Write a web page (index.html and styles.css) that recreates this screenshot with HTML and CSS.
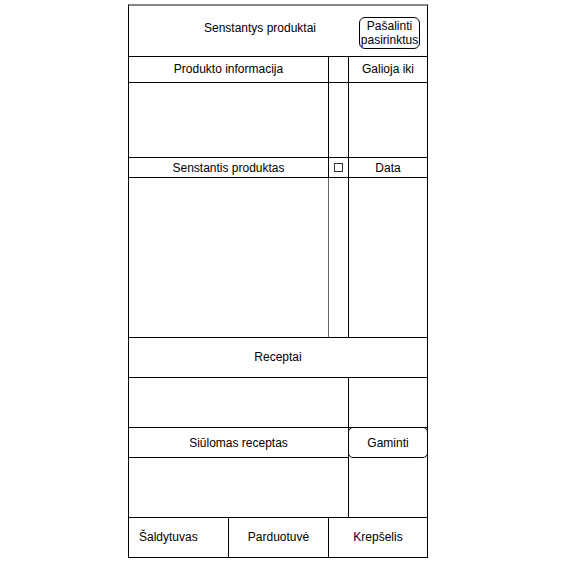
FILE: index.html
```html
<!DOCTYPE html>
<html lang="lt">
<head>
    <meta charset="UTF-8">
    <meta name="viewport" content="width=device-width, initial-scale=1.0">
    <title>Senstantys produktai</title>
    <link rel="stylesheet" href="styles.css">
</head>
<body>
    <div class="frame">
        <div class="header">
            <div class="title">Senstantys produktai</div>
            <div class="btn-remove">Pašalinti<br>pasirinktus</div>
        </div>

        <div class="table">
            <div class="cell head col-a">Produkto informacija</div>
            <div class="cell head col-b"></div>
            <div class="cell head col-c">Galioja iki</div>

            <div class="cell blank-1 col-a"></div>
            <div class="cell blank-1 col-b"></div>
            <div class="cell blank-1 col-c"></div>

            <div class="cell row col-a">Senstantis produktas</div>
            <div class="cell row col-b"><span class="check"></span></div>
            <div class="cell row col-c">Data</div>

            <div class="cell blank-2 col-a"></div>
            <div class="cell blank-2 col-b"></div>
            <div class="cell blank-2 col-c"></div>
        </div>

        <div class="section-title">Receptai</div>

        <div class="recipes">
            <div class="r-cell r-top left"></div>
            <div class="r-cell r-top"></div>
            <div class="r-cell r-mid left">Siūlomas receptas</div>
            <div class="btn-cook">Gaminti</div>
            <div class="r-cell r-bottom left"></div>
            <div class="r-cell r-bottom"></div>
        </div>

        <div class="nav">
            <div class="nav-item first">Šaldytuvas</div>
            <div class="nav-item">Parduotuvė</div>
            <div class="nav-item last">Krepšelis</div>
        </div>
    </div>
</body>
</html>
```

FILE: styles.css
```css
body {
    margin: 0;
    background: #fff;
    font-family: "Liberation Sans", Arial, sans-serif;
    font-size: 12px;
    color: #000;
}
.frame {
    box-sizing: border-box;
    width: 300px;
    margin: 4px 0 0 128px;
    border: 1px solid #000;
    border-top: 2px solid #888;
}
.header {
    display: flex;
    align-items: center;
    height: 50px;
    border-bottom: 1px solid #000;
}
.title {
    flex: 1;
    padding-left: 32px;
    margin-bottom: 6px;
    text-align: center;
}
.btn-remove {
    box-sizing: border-box;
    width: 61px;
    height: 32px;
    margin: 4px 7px 0 0;
    border: 1px solid #000;
    border-radius: 6px;
    text-align: center;
    line-height: 14px;
    padding-top: 1px;
}
.table {
    display: grid;
    grid-template-columns: 200px 20px 78px;
}
.cell {
    display: flex;
    align-items: center;
    justify-content: center;
    border-bottom: 1px solid #000;
}
.col-a,
.col-b {
    border-right: 1px solid #000;
}
.col-a.blank-2 {
    border-right-color: #666;
}
.head {
    height: 23px;
    padding-bottom: 2px;
}
.blank-1 {
    height: 74px;
}
.row {
    height: 19px;
}
.blank-2 {
    height: 159px;
}
.check {
    box-sizing: border-box;
    width: 9px;
    height: 9px;
    border: 1px solid #333;
}
.section-title {
    height: 39px;
    line-height: 39px;
    text-align: center;
    border-bottom: 1px solid #000;
}
.recipes {
    display: grid;
    grid-template-columns: 220px 78px;
}
.r-cell {
    display: flex;
    align-items: center;
    justify-content: center;
}
.r-cell.left {
    border-right: 1px solid #000;
}
.r-top {
    height: 49px;
    border-bottom: 1px solid #000;
}
.r-mid {
    height: 29px;
    border-bottom: 1px solid #000;
}
.r-bottom {
    height: 59px;
}
.btn-cook {
    display: flex;
    align-items: center;
    justify-content: center;
    height: 29px;
    margin: -1px -1px 0 -1px;
    border: 1px solid #000;
    border-radius: 5px;
    background: #fff;
}
.nav {
    display: grid;
    grid-template-columns: 100px 100px 98px;
    border-top: 1px solid #000;
}
.nav-item {
    height: 39px;
    line-height: 39px;
    text-align: center;
    border-right: 1px solid #000;
}
.nav-item.first {
    text-align: left;
    padding-left: 10px;
}
.nav-item.last {
    border-right: none;
}
```
